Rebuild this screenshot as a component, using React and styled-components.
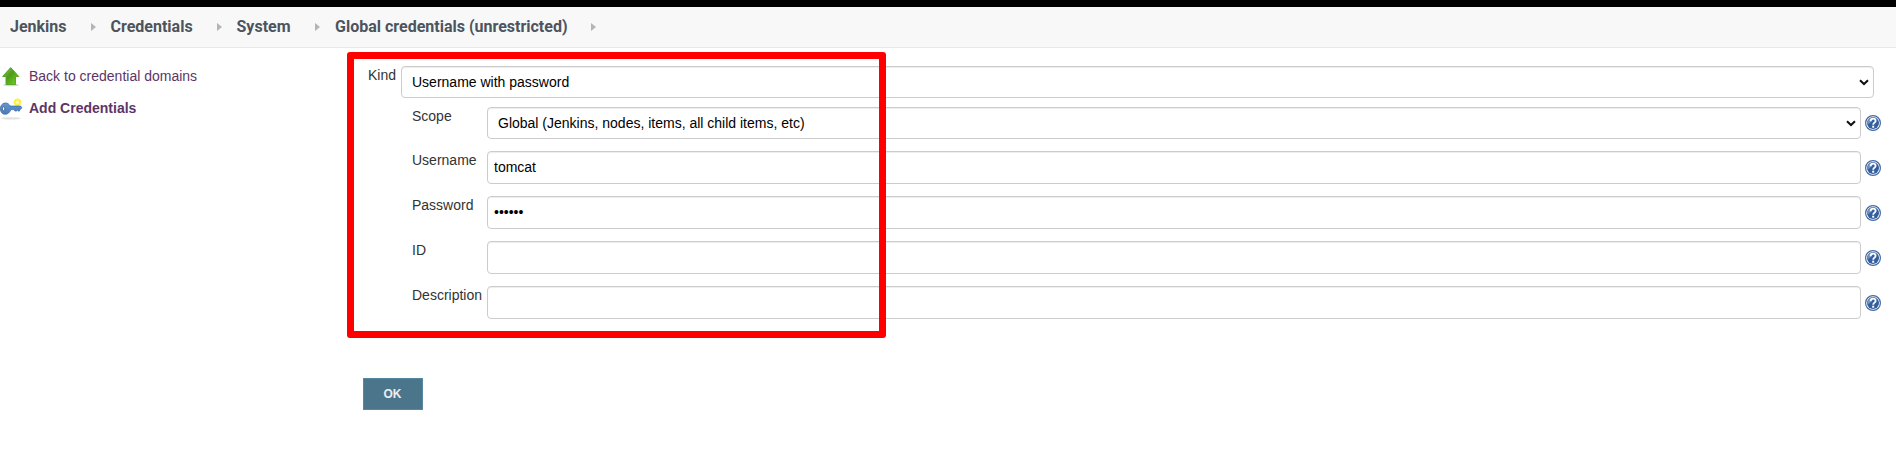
import React from "react";
import styled, { createGlobalStyle } from "styled-components";

const GlobalStyle = createGlobalStyle`
  *, *::before, *::after { box-sizing: border-box; }
  body {
    margin: 0;
    background: #fff;
    color: #333;
    font-family: "Liberation Sans", Arial, sans-serif;
    font-size: 14px;
    line-height: 20px;
    overflow: hidden;
  }
`;

const Page = styled.div`
  position: relative;
  min-height: 450px;
`;

const TopBar = styled.div`
  height: 7px;
  background: #000;
`;

const Breadcrumbs = styled.nav`
  display: flex;
  align-items: center;
  height: 41px;
  padding-left: 10px;
  background: #f8f8f8;
  border-bottom: 1px solid #e8e8e8;
`;

const Crumb = styled.a`
  width: ${(p) => p.$width}px;
  color: #4d545d;
  font: bold 16px/20px Roboto, sans-serif;
  white-space: nowrap;
`;

const Separator = styled.svg`
  width: 5px;
  height: 8px;
  margin: 0 15px 0 24px;
  fill: #b4b4b4;
`;

const Body = styled.div`
  display: flex;
`;

const Sidebar = styled.aside`
  display: flex;
  flex-direction: column;
  gap: 12px;
  width: 363px;
  padding-top: 18px;
`;

const Task = styled.a`
  display: flex;
  align-items: center;
  gap: 5px;
  height: 20px;
  color: #5c3566;
  font-weight: ${(p) => (p.$active ? "bold" : "normal")};
`;

const TaskIcon = styled.svg`
  width: 24px;
  height: 24px;
  flex: none;
`;

const Form = styled.form`
  flex: 1;
  padding: 18px 15px 0 5px;
`;

const KindRow = styled.div`
  display: flex;
  padding-right: 7px;
`;

const Nested = styled.div`
  display: flex;
  flex-direction: column;
  gap: 12px;
  padding: 9px 0 0 44px;
`;

const Row = styled.div`
  display: flex;
`;

const Label = styled.label`
  flex: none;
  width: ${(p) => p.$width}px;
  height: 18px;
  line-height: 18px;
`;

const SelectBox = styled.div`
  position: relative;
  flex: 1;
`;

const Select = styled.select`
  display: block;
  width: 100%;
  height: 32px;
  padding: 0 10px;
  appearance: none;
  background: #fff;
  border: 1px solid #ccc;
  border-radius: 4px;
  box-shadow: inset 0 1px 1px rgba(0, 0, 0, 0.075);
  color: #000;
  font: inherit;
`;

const Chevron = styled.svg`
  position: absolute;
  top: 13px;
  right: 5px;
  width: 10px;
  height: 7px;
  fill: none;
  stroke: #101010;
  stroke-width: 2;
  pointer-events: none;
`;

const Input = styled.input`
  display: block;
  flex: 1;
  height: 33px;
  padding: 0 6px 1px;
  background: #fff;
  border: 1px solid #ccc;
  border-radius: 4px;
  box-shadow: inset 0 1px 1px rgba(0, 0, 0, 0.075);
  color: #000;
  font: inherit;
`;

const HelpSvg = styled.svg`
  flex: none;
  width: 16px;
  height: 16px;
  margin: ${(p) => p.$top}px 0 0 4px;
`;

const OkButton = styled.button`
  display: block;
  width: 60px;
  height: 32px;
  margin: 59px 0 0 -5px;
  padding: 0 1px 0 0;
  background: #4b758b;
  border: 1px solid #5788a1;
  color: #eee;
  font: bold 12px/20px "Liberation Sans", Arial, sans-serif;
`;

const Highlight = styled.div`
  position: absolute;
  left: 347px;
  top: 52px;
  width: 539px;
  height: 286px;
  border: 7px solid #fe0000;
  border-radius: 3px;
  pointer-events: none;
`;

const crumbs = [
  { text: "Jenkins", width: 56.5 },
  { text: "Credentials", width: 82 },
  { text: "System", width: 54.5 },
  { text: "Global credentials (unrestricted)", width: 231.5 },
];

const fields = [
  { label: "Username", type: "text", value: "tomcat" },
  { label: "Password", type: "password", value: "tomcat" },
  { label: "ID", type: "text", value: "" },
  { label: "Description", type: "text", value: "" },
];

function UpIcon() {
  return (
    <TaskIcon viewBox="0 0 24 24">
      <defs>
        <linearGradient id="up" x1="0" y1="0" x2="1" y2="1">
          <stop offset="0" stopColor="#8ccb58" />
          <stop offset="0.45" stopColor="#4f9c18" />
          <stop offset="1" stopColor="#74d628" />
        </linearGradient>
      </defs>
      <ellipse cx="11" cy="21" rx="8" ry="1.3" fill="#000" opacity="0.15" />
      <path
        d="M10.7 3.6 18.8 12.5H15.5V20.5H6V12.5H2.6Z"
        fill="url(#up)"
        stroke="#5aa52c"
        strokeWidth="1"
        strokeLinejoin="round"
      />
    </TaskIcon>
  );
}

function KeyIcon() {
  return (
    <TaskIcon viewBox="0 0 24 24">
      <defs>
        <linearGradient id="metal" x1="0" y1="0" x2="0" y2="1">
          <stop offset="0" stopColor="#6496cf" />
          <stop offset="1" stopColor="#4a7cba" />
        </linearGradient>
      </defs>
      <ellipse cx="11" cy="22.4" rx="9.5" ry="1.1" fill="#000" opacity="0.12" />
      <circle cx="17.5" cy="6.3" r="3.7" fill="#fff045" />
      <circle cx="17.5" cy="6.3" r="1.7" fill="#fff9b0" />
      <path
        d="M5 7C7.6 6.8 9.3 8.3 10.3 10.1H20.7L21.8 11.8 20.6 13.3H19.6V15H18V13.6H16.8V15H14.8V13.6H10.8C9.8 16.6 7.6 18.5 4.7 18.3 2 18.1.4 15.8.4 12.8S2.2 7.3 5 7Z"
        fill="url(#metal)"
        stroke="#3f6fab"
        strokeWidth="0.8"
        strokeLinejoin="round"
      />
      <ellipse cx="3.6" cy="12.8" rx="1.2" ry="2" fill="#fff" stroke="#31588c" strokeWidth="0.8" />
    </TaskIcon>
  );
}

function HelpIcon({ top }) {
  return (
    <HelpSvg viewBox="0 0 16 16" $top={top}>
      <circle cx="8" cy="8" r="7.4" fill="#fff" stroke="#4169a3" strokeWidth="1.2" />
      <circle cx="8" cy="8" r="6" fill="#345f9f" />
      <path d="M2.4 9.4A5.8 5.8 0 0 1 8.5 2.3 10 10 0 0 1 2.4 9.4Z" fill="#7090c0" />
      <path
        d="M5.6 6.2C5.6 4.3 6.7 3.6 8.1 3.6S10.6 4.4 10.6 5.9C10.6 7.6 8.2 7.7 8.2 9.7"
        fill="none"
        stroke="#fff"
        strokeWidth="1.8"
      />
      <rect x="7.2" y="10.7" width="2" height="2" fill="#fff" />
    </HelpSvg>
  );
}

function SelectField({ value }) {
  return (
    <SelectBox>
      <Select defaultValue={value}>
        <option>{value}</option>
      </Select>
      <Chevron viewBox="0 0 10 7">
        <path d="M1 1.2 5 5 9 1.2" />
      </Chevron>
    </SelectBox>
  );
}

export default function App() {
  return (
    <Page>
      <GlobalStyle />
      <TopBar />
      <Breadcrumbs>
        {crumbs.map((c) => (
          <React.Fragment key={c.text}>
            <Crumb $width={c.width}>{c.text}</Crumb>
            <Separator viewBox="0 0 5 8">
              <path d="M0 0 5 4 0 8Z" />
            </Separator>
          </React.Fragment>
        ))}
      </Breadcrumbs>
      <Body>
        <Sidebar>
          <Task>
            <UpIcon />
            Back to credential domains
          </Task>
          <Task $active>
            <KeyIcon />
            Add Credentials
          </Task>
        </Sidebar>
        <Form>
          <KindRow>
            <Label $width={33}>Kind</Label>
            <SelectField value="Username with password" />
          </KindRow>
          <Nested>
            <Row>
              <Label $width={75}>Scope</Label>
              <SelectField value="Global (Jenkins, nodes, items, all child items, etc)" />
              <HelpIcon top={8} />
            </Row>
            {fields.map((f) => (
              <Row key={f.label}>
                <Label $width={75}>{f.label}</Label>
                <Input type={f.type} defaultValue={f.value} />
                <HelpIcon top={9} />
              </Row>
            ))}
          </Nested>
          <OkButton type="button">OK</OkButton>
        </Form>
      </Body>
      <Highlight />
    </Page>
  );
}
